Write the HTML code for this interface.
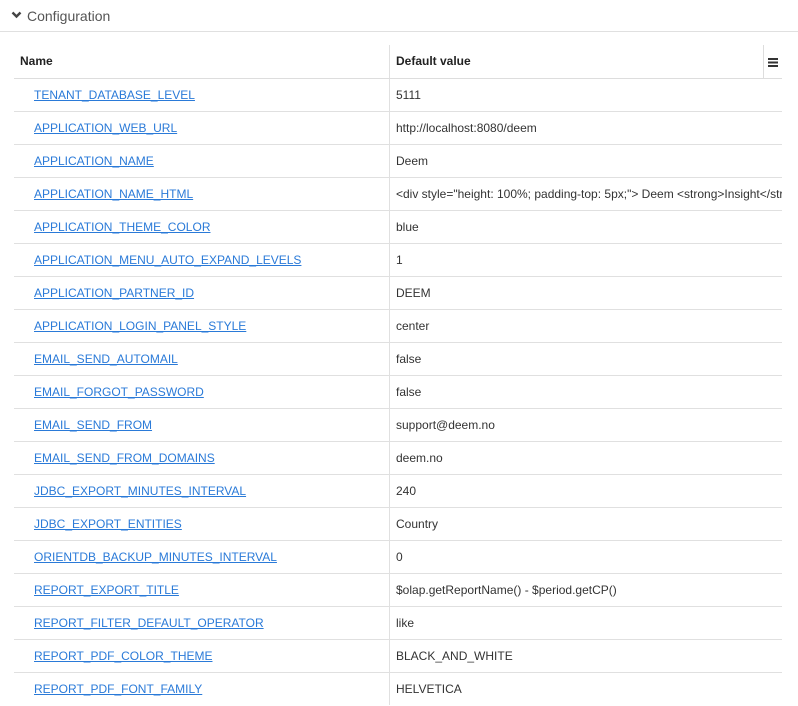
<!DOCTYPE html>
<html><head><meta charset="utf-8"><style>
*{margin:0;padding:0;box-sizing:border-box}
body{width:798px;height:703px;overflow:hidden;background:#fff;font-family:"Liberation Sans",Arial,sans-serif;font-size:12px;color:#333;position:relative}
.top{position:absolute;left:0;top:0;width:798px;height:32px;border-bottom:1px solid #e0e0e0}
.top span{position:absolute;left:27px;top:8px;font-size:14px;color:#555}
.top svg{position:absolute;left:11px;top:11px}
.tbl{position:absolute;left:14px;top:45px;width:768px}
.row{position:relative;height:33px;border-bottom:1px solid #e0e0e0}
.row .a{position:absolute;left:20px;top:9px;color:#2a7ad8;text-decoration:underline}
.row .b{position:absolute;left:382px;top:9px;white-space:nowrap;width:386px;overflow:hidden;color:#333}
.vl{position:absolute;left:375px;top:0;width:1px;height:660px;background:#e0e0e0}
.hd{height:34px;border-bottom:1px solid #ddd}
.hd .h{position:absolute;top:9px;font-weight:bold;color:#222;font-size:12px}
</style></head><body>
<div class="top"><svg width="11" height="8" viewBox="0 0 11 8"><path d="M1.5 1.5 L5.5 5.5 L9.5 1.5" stroke="#444" stroke-width="2.4" fill="none"/></svg><span>Configuration</span></div>
<div class="tbl">
<div class="vl"></div>
<div class="row hd"><span class="h" style="left:6px">Name</span><span class="h" style="left:382px">Default value</span>
<div style="position:absolute;left:749px;top:0;width:1px;height:34px;background:#ddd"></div>
<svg style="position:absolute;left:754px;top:13px" width="10" height="9"><rect y="0" width="10" height="2" fill="#333"/><rect y="3.5" width="10" height="2" fill="#333"/><rect y="7" width="10" height="2" fill="#333"/></svg></div>
<div class="row"><span class="a">TENANT_DATABASE_LEVEL</span><span class="b">5111</span></div>
<div class="row"><span class="a">APPLICATION_WEB_URL</span><span class="b">http://localhost:8080/deem</span></div>
<div class="row"><span class="a">APPLICATION_NAME</span><span class="b">Deem</span></div>
<div class="row"><span class="a">APPLICATION_NAME_HTML</span><span class="b">&lt;div style="height: 100%; padding-top: 5px;"&gt; Deem &lt;strong&gt;Insight&lt;/strong&gt;</span></div>
<div class="row"><span class="a">APPLICATION_THEME_COLOR</span><span class="b">blue</span></div>
<div class="row"><span class="a">APPLICATION_MENU_AUTO_EXPAND_LEVELS</span><span class="b">1</span></div>
<div class="row"><span class="a">APPLICATION_PARTNER_ID</span><span class="b">DEEM</span></div>
<div class="row"><span class="a">APPLICATION_LOGIN_PANEL_STYLE</span><span class="b">center</span></div>
<div class="row"><span class="a">EMAIL_SEND_AUTOMAIL</span><span class="b">false</span></div>
<div class="row"><span class="a">EMAIL_FORGOT_PASSWORD</span><span class="b">false</span></div>
<div class="row"><span class="a">EMAIL_SEND_FROM</span><span class="b">support@deem.no</span></div>
<div class="row"><span class="a">EMAIL_SEND_FROM_DOMAINS</span><span class="b">deem.no</span></div>
<div class="row"><span class="a">JDBC_EXPORT_MINUTES_INTERVAL</span><span class="b">240</span></div>
<div class="row"><span class="a">JDBC_EXPORT_ENTITIES</span><span class="b">Country</span></div>
<div class="row"><span class="a">ORIENTDB_BACKUP_MINUTES_INTERVAL</span><span class="b">0</span></div>
<div class="row"><span class="a">REPORT_EXPORT_TITLE</span><span class="b">$olap.getReportName() - $period.getCP()</span></div>
<div class="row"><span class="a">REPORT_FILTER_DEFAULT_OPERATOR</span><span class="b">like</span></div>
<div class="row"><span class="a">REPORT_PDF_COLOR_THEME</span><span class="b">BLACK_AND_WHITE</span></div>
<div class="row" style="border-bottom:none"><span class="a">REPORT_PDF_FONT_FAMILY</span><span class="b">HELVETICA</span></div>
</div>
</body></html>
